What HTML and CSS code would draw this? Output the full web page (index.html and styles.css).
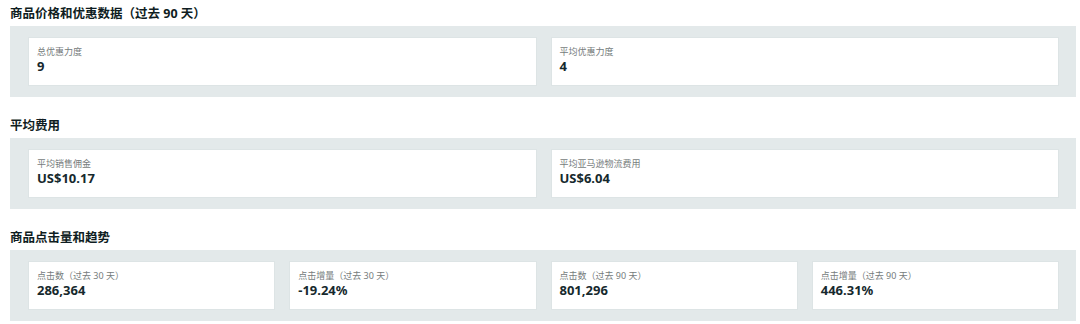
FILE: index.html
```
<!DOCTYPE html>
<html lang="zh-CN">
<head>
    <meta charset="UTF-8">
    <meta name="viewport" content="width=device-width, initial-scale=1.0">
    <title>商品数据</title>
    <link rel="stylesheet" href="styles.css">
</head>
<body>
    <div class="section">
        <h2 class="section-title">商品价格和优惠数据（过去 90 天）</h2>
        <div class="panel">
            <div class="card wide">
                <div class="card-label">总优惠力度</div>
                <div class="card-value">9</div>
            </div>
            <div class="card wide">
                <div class="card-label">平均优惠力度</div>
                <div class="card-value">4</div>
            </div>
        </div>
    </div>

    <div class="section">
        <h2 class="section-title">平均费用</h2>
        <div class="panel">
            <div class="card wide">
                <div class="card-label">平均销售佣金</div>
                <div class="card-value">US$10.17</div>
            </div>
            <div class="card wide">
                <div class="card-label">平均亚马逊物流费用</div>
                <div class="card-value">US$6.04</div>
            </div>
        </div>
    </div>

    <div class="section">
        <h2 class="section-title">商品点击量和趋势</h2>
        <div class="panel">
            <div class="card">
                <div class="card-label">点击数（过去 30 天）</div>
                <div class="card-value">286,364</div>
            </div>
            <div class="card">
                <div class="card-label">点击增量（过去 30 天）</div>
                <div class="card-value">-19.24%</div>
            </div>
            <div class="card">
                <div class="card-label">点击数（过去 90 天）</div>
                <div class="card-value">801,296</div>
            </div>
            <div class="card">
                <div class="card-label">点击增量（过去 90 天）</div>
                <div class="card-value">446.31%</div>
            </div>
        </div>
    </div>
</body>
</html>
```

FILE: styles.css
```
body {
    margin: 0;
    padding: 5px 4px 0 10px;
    background: #fff;
    font-family: "Noto Sans", "Noto Sans CJK SC", sans-serif;
    color: #0f1d22;
}
.section {
    margin-bottom: 20px;
}
.section:last-child {
    margin-bottom: 0;
}
.section-title {
    margin: 0 0 3px 0;
    font-size: 12.5px;
    line-height: 18px;
    font-weight: 700;
    color: #0f1d22;
}
.panel {
    background: #e3e9ea;
    padding: 11px 17px 11px 18px;
    display: grid;
    grid-template-columns: repeat(4, 1fr);
    gap: 14px;
}
.card {
    background: #fff;
    border: 1px solid #dde4e5;
    padding: 8px 8px 11px 8px;
}
.card.wide {
    grid-column: span 2;
}
.card-label {
    font-size: 9px;
    line-height: 12px;
    color: #767c7c;
}
.card-value {
    font-size: 13px;
    line-height: 16px;
    font-weight: 700;
    color: #16292d;
}
```
